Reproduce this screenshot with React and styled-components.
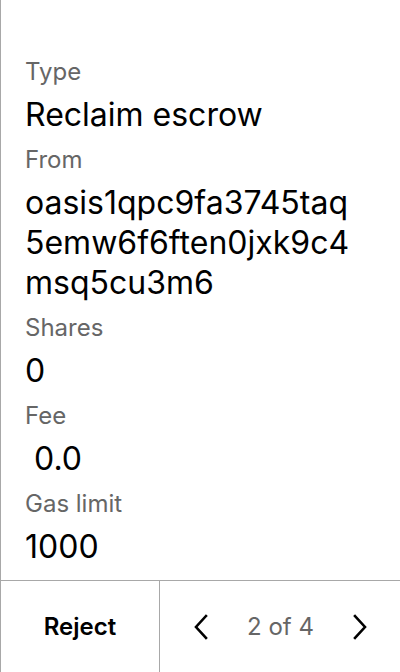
import React from "react";
import styled, { createGlobalStyle } from "styled-components";

const Global = createGlobalStyle`
  html, body { margin: 0; padding: 0; background: #fff; }
  body { font-family: Inter, "Noto Sans", sans-serif; }
  #root { height: 672px; }
`;

const Page = styled.div`
  box-sizing: border-box;
  width: 400px;
  height: 672px;
  border-left: 1px solid #a8a8a8;
  display: flex;
  flex-direction: column;
  background: #fff;
`;

const Content = styled.div`
  flex: 1;
  padding: 58px 36px 0 24px;
  display: flex;
  flex-direction: column;
  gap: 11px;
`;

const Field = styled.div`
  display: flex;
  flex-direction: column;
`;

const Label = styled.div`
  font-size: 24px;
  line-height: 28px;
  color: #666;
`;

const Value = styled.div`
  margin-top: 9px;
  font-size: 32px;
  line-height: 40px;
  color: #000;
  word-break: break-all;
`;

const Footer = styled.div`
  height: 92px;
  border-top: 1px solid #a8a8a8;
  display: grid;
  grid-template-columns: 159px 1fr;
  box-sizing: border-box;
`;

const RejectButton = styled.button`
  border: none;
  background: none;
  font-family: inherit;
  font-size: 24px;
  font-weight: 600;
  color: #000;
  border-right: 1px solid #a8a8a8;
  padding: 0;
`;

const Pager = styled.div`
  display: flex;
  align-items: center;
  justify-content: space-between;
  padding: 0 30px 0 31px;
`;

const Arrow = styled.button`
  border: none;
  background: none;
  padding: 0;
  width: 20px;
  height: 28px;
  display: flex;
  align-items: center;
  justify-content: center;
`;

const PageText = styled.span`
  font-size: 24px;
  color: #666;
`;

const Chevron = ({ dir }) => (
  <svg width="16" height="26" viewBox="0 0 16 26" fill="none">
    <path
      d={dir === "left" ? "M13 2 L3 13 L13 24" : "M3 2 L13 13 L3 24"}
      stroke="#000"
      strokeWidth="2.6"
      strokeLinecap="square"
      strokeLinejoin="miter"
    />
  </svg>
);

const fields = [
  ["Type", "Reclaim escrow"],
  ["From", "oasis1qpc9fa3745taq5emw6f6ften0jxk9c4msq5cu3m6"],
  ["Shares", "0"],
  ["Fee", "\u00a00.0"],
  ["Gas limit", "1000"],
];

export default function App() {
  return (
    <>
      <Global />
      <Page>
        <Content>
          {fields.map(([l, v]) => (
            <Field key={l}>
              <Label>{l}</Label>
              <Value>{v}</Value>
            </Field>
          ))}
        </Content>
        <Footer>
          <RejectButton>Reject</RejectButton>
          <Pager>
            <Arrow aria-label="Previous">
              <Chevron dir="left" />
            </Arrow>
            <PageText>2 of 4</PageText>
            <Arrow aria-label="Next">
              <Chevron dir="right" />
            </Arrow>
          </Pager>
        </Footer>
      </Page>
    </>
  );
}
